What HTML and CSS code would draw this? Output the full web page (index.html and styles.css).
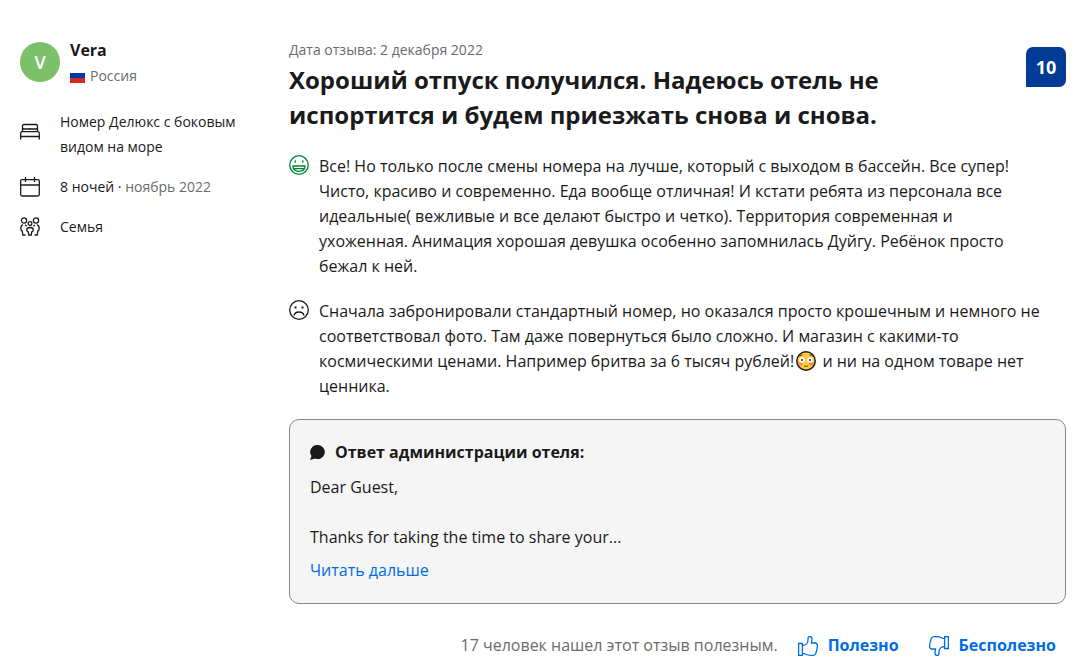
FILE: index.html
```html
<!DOCTYPE html>
<html lang="ru">
<head>
    <meta charset="UTF-8">
    <meta name="viewport" content="width=device-width, initial-scale=1.0">
    <title>Отзыв гостя - Vera</title>
    <link rel="stylesheet" href="styles.css">
</head>
<body>
    <article class="review">
        <!-- Guest -->
        <aside class="guest">
            <div class="guest-header">
                <div class="avatar">V</div>
                <div>
                    <div class="guest-name">Vera</div>
                    <div class="guest-country">
                        <svg class="flag" viewBox="0 0 15 15" aria-hidden="true">
                            <path fill="#fff" d="M0 0h15v5H0z"/>
                            <path fill="#0039a6" d="M0 5h15v5H0z"/>
                            <path fill="#d52b1e" d="M0 10h15v5H0z"/>
                        </svg>
                        <span>Россия</span>
                    </div>
                </div>
            </div>

            <ul class="stay">
                <li class="stay-item">
                    <svg class="icon" viewBox="0 0 20 20" aria-hidden="true">
                        <path d="M.7 18.500v-6.300q0-1.500 1.500-1.500h15.600q1.500 0 1.500 1.500v6.300M.7 15.500h18.600M2.500 10.500V5q0-1.500 1.500-1.500h12q1.500 0 1.500 1.500v5.500M3 7q0 1 1 1h5q1 0 1-1 0 1 1 1h5q1 0 1-1"/>
                    </svg>
                    <span>Номер Делюкс с боковым видом на море</span>
                </li>
                <li class="stay-item">
                    <svg class="icon" viewBox="0 0 20 20" aria-hidden="true">
                        <path d="M2 2.700h16q1.300 0 1.300 1.300v13.500q0 1.500-1.500 1.500H2.200q-1.500 0-1.500-1.500V4q0-1.300 1.300-1.300zM.7 8h18.600M5.500 0v5M14.500 0v5"/>
                    </svg>
                    <span>8 ночей · <span class="muted">ноябрь 2022</span></span>
                </li>
                <li class="stay-item">
                    <svg class="icon" viewBox="0 0 20 20" aria-hidden="true">
                        <circle cx="4" cy="3.500" r="2.600"/>
                        <circle cx="16" cy="3.500" r="2.600"/>
                        <circle cx="10" cy="6.500" r="1.900"/>
                        <path d="M3 7.700Q.8 8.500.8 11.500q0 2 1.500 2.700l.5 3.800h2.700M17 7.700q2.200.8 2.200 3.800 0 2-1.500 2.700l-.5 3.800h-2.700M5 8l1.700 1.200M15 8l-1.700 1.200M8.700 18l-.4-3q-1.600-.3-1.600-2.200 0-2.300 3.300-2.300t3.300 2.300q0 1.900-1.600 2.200l-.4 3z"/>
                    </svg>
                    <span>Семья</span>
                </li>
            </ul>
        </aside>

        <!-- Review -->
        <div class="content">
            <header class="review-header">
                <div>
                    <div class="review-date">Дата отзыва: 2 декабря 2022</div>
                    <h1 class="review-title">Хороший отпуск получился. Надеюсь отель не испортится и будем приезжать снова и снова.</h1>
                </div>
                <div class="score">10</div>
            </header>

            <div class="comment">
                <svg class="icon icon-good" viewBox="0 0 20 20" aria-label="Понравилось">
                    <circle cx="10" cy="10" r="9.300"/>
                    <path d="M4 11h12c0 3.500-2.500 5.300-6 5.300S4 14.500 4 11zM5.300 13.700h9.400"/>
                    <path class="eye" d="M5.500 5.500h1.500v2H5.500zM13 5.500h1.500v2H13z"/>
                </svg>
                <p>Все! Но только после смены номера на лучше, который с выходом в бассейн. Все супер! Чисто, красиво и современно. Еда вообще отличная! И кстати ребята из персонала все идеальные( вежливые и все делают быстро и четко). Территория современная и ухоженная. Анимация хорошая девушка особенно запомнилась Дуйгу. Ребёнок просто бежал к ней.</p>
            </div>

            <div class="comment">
                <svg class="icon" viewBox="0 0 20 20" aria-label="Не понравилось">
                    <circle cx="10" cy="10" r="9.300"/>
                    <path d="M5 15.500c.5-2.300 2.500-3.500 5-3.500s4.500 1.200 5 3.500"/>
                    <path class="eye" d="M5.500 6.500h2v2h-2zM12.500 6.500h2v2h-2z"/>
                </svg>
                <p>Сначала забронировали стандартный номер, но оказался просто крошечным и немного не соответствовал фото. Там даже повернуться было сложно. И магазин с какими-то космическими ценами. Например бритва за 6 тысяч рублей!<svg class="emoji" viewBox="0 0 20 20" aria-hidden="true">
                    <circle cx="10" cy="10" r="9.200" fill="#ffc83d" stroke="#1a1a1a" stroke-width="1.500"/>
                    <ellipse cx="4.500" cy="12.700" rx="2.300" ry="1.700" fill="#ff8257"/>
                    <ellipse cx="15.500" cy="12.700" rx="2.300" ry="1.700" fill="#ff8257"/>
                    <circle cx="6" cy="9" r="2.800" fill="#fff"/>
                    <circle cx="14" cy="9" r="2.800" fill="#fff"/>
                    <circle cx="6" cy="9" r="1.100" fill="#402a32"/>
                    <circle cx="14" cy="9" r="1.100" fill="#402a32"/>
                    <path d="M3.500 5.200q1.500-1.500 3-1.200M16.500 5.200q-1.500-1.500-3-1.200M8 15.200h4" fill="none" stroke="#6b4320"/>
                </svg> и ни на одном товаре нет ценника.</p>
            </div>

            <section class="response">
                <h2 class="response-title">
                    <svg class="bubble" viewBox="0 0 15 15" aria-hidden="true">
                        <path d="M8 0a7 7 0 1 1-2.800 13.500L0 15l1.500-4A7 7 0 0 1 8 0z"/>
                    </svg>
                    <span>Ответ администрации отеля:</span>
                </h2>
                <p>Dear Guest,</p>
                <p class="response-text">Thanks for taking the time to share your...</p>
                <a class="read-more" href="#">Читать дальше</a>
            </section>

            <footer class="votes">
                <span class="votes-count">17 человек нашел этот отзыв полезным.</span>
                <button class="vote" type="button">
                    <svg class="icon" viewBox="0 0 20 20" aria-hidden="true">
                        <path d="M.6 7.500h3.800v12H.6zM4.500 9.500c3.500 0 5.500-2.500 5.500-5.500V2.500q0-2 2-2t2 2.500l-.5 4h4q2.200.3 1.900 3c-.2 3-.9 6-1.900 8q-.7 1.300-2.500 1.300-5 .3-8-1.300-1-.7-2.500-.7"/>
                    </svg>
                    <span>Полезно</span>
                </button>
                <button class="vote" type="button">
                    <svg class="icon icon-down" viewBox="0 0 20 20" aria-hidden="true">
                        <path d="M.6 7.500h3.800v12H.6zM4.500 9.500c3.500 0 5.500-2.500 5.500-5.500V2.500q0-2 2-2t2 2.500l-.5 4h4q2.200.3 1.900 3c-.2 3-.9 6-1.900 8q-.7 1.300-2.500 1.300-5 .3-8-1.300-1-.7-2.500-.7"/>
                    </svg>
                    <span>Бесполезно</span>
                </button>
            </footer>
        </div>
    </article>
</body>
</html>
```
FILE: styles.css
```css
* {
    margin: 0;
    padding: 0;
    box-sizing: border-box;
}

body {
    font-family: "Open Sans", "Noto Sans", sans-serif;
    font-size: 16px;
    line-height: 25px;
    color: #1a1a1a;
    background-color: #fff;
}

.review {
    display: grid;
    grid-template-columns: 229px 1fr;
    gap: 40px;
    padding: 38px 24px 8px 20px;
}

.icon {
    width: 20px;
    height: 20px;
    flex-shrink: 0;
    fill: none;
    stroke: currentColor;
    stroke-width: 1.3;
}

.icon-good {
    color: #008234;
}

.icon .eye {
    fill: currentColor;
    stroke: none;
}

.icon-down {
    transform: rotate(180deg);
}

.muted {
    color: #6b6b6b;
}

/* Guest */
.guest {
    font-size: 14px;
}

.guest-header {
    display: flex;
    align-items: flex-start;
    gap: 10px;
}

.avatar {
    width: 40px;
    height: 40px;
    margin-top: 4px;
    border-radius: 50%;
    background-color: #7dc06a;
    color: #fff;
    font-size: 18px;
    font-weight: 600;
    line-height: 40px;
    text-align: center;
}

.guest-name {
    font-size: 16px;
    font-weight: bold;
}

.guest-country {
    display: flex;
    align-items: center;
    gap: 5px;
    color: #6b6b6b;
}

.flag {
    width: 15px;
    height: 15px;
}

.stay {
    margin-top: 21px;
    list-style: none;
}

.stay-item {
    display: flex;
    align-items: center;
    gap: 20px;
    margin-bottom: 15px;
}

.stay-item:first-child .icon {
    margin-bottom: 6px;
}

/* Review */
.review-header {
    display: flex;
    justify-content: space-between;
    align-items: flex-start;
    gap: 40px;
    margin-bottom: 22px;
}

.review-date {
    font-size: 14px;
    line-height: 24px;
    color: #6b6b6b;
}

.review-title {
    max-width: 620px;
    font-size: 24px;
    line-height: 35px;
}

.score {
    width: 40px;
    height: 40px;
    flex-shrink: 0;
    margin-top: 9px;
    border-radius: 7px 7px 7px 0;
    background-color: #003b95;
    color: #fff;
    font-size: 18px;
    font-weight: bold;
    line-height: 40px;
    text-align: center;
}

.comment {
    display: flex;
    gap: 10px;
    margin-bottom: 20px;
    padding-right: 24px;
}

.comment .icon {
    margin-top: 1px;
}

.emoji {
    width: 20px;
    height: 20px;
    margin: 0 2px;
    vertical-align: -4px;
}

.response {
    padding: 20px;
    border: 1px solid #868686;
    border-radius: 10px;
    background-color: #f5f5f5;
}

.response-title {
    display: flex;
    align-items: center;
    gap: 10px;
    margin-bottom: 10px;
    font-size: 16px;
}

.bubble {
    width: 15px;
    height: 15px;
    fill: #1a1a1a;
}

.response-text {
    margin-top: 25px;
}

.read-more {
    display: inline-block;
    margin-top: 8px;
    color: #006ce4;
    text-decoration: none;
}

.votes {
    display: flex;
    justify-content: flex-end;
    align-items: center;
    gap: 10px;
    margin-top: 24px;
}

.votes-count {
    color: #6b6b6b;
}

.vote {
    display: flex;
    align-items: center;
    gap: 10px;
    padding: 5px 10px;
    border: 0;
    background: none;
    color: #006ce4;
    font: inherit;
    font-weight: bold;
    cursor: pointer;
}
```
